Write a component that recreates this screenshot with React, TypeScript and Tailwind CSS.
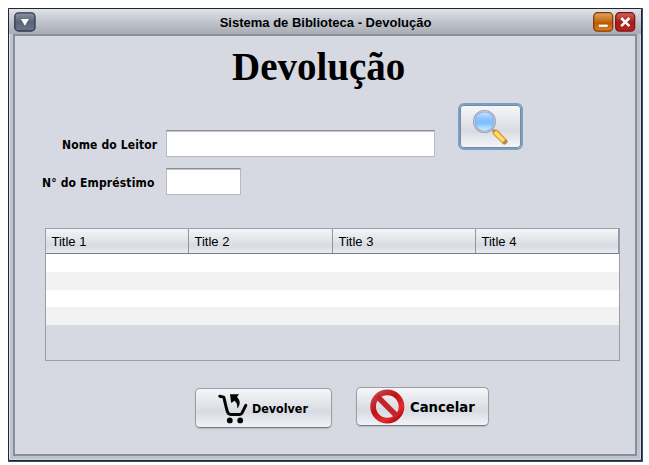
import React from "react";

const label = "font-['DejaVu_Sans_Condensed','DejaVu_Sans',sans-serif] font-stretch-condensed font-bold text-black whitespace-nowrap";
const button =
  "flex items-center rounded-[5px] border border-[#9b9da4] border-b-[#777a81] bg-linear-to-b from-[#f6f7f9] via-[#d8dbe1] via-60% to-[#f0f2f7] shadow-[0_1px_1px_#b5b9c2]";
const field =
  "h-[27px] border border-[#b8bac0] border-t-[#8d8e91] bg-white shadow-[inset_0_1px_0_#c4c5c7] outline-none";

function MenuButton() {
  return (
    <svg width="22" height="20" viewBox="0 0 22 20">
      <defs>
        <linearGradient id="menu" x2="0" y2="1">
          <stop stopColor="#8b94a3" />
          <stop offset=".5" stopColor="#596477" />
          <stop offset="1" stopColor="#69758a" />
        </linearGradient>
      </defs>
      <rect x=".8" y=".8" width="20.2" height="18.2" rx="3.8" fill="url(#menu)" stroke="#303a4b" strokeWidth="1.3" />
      <path d="M6.9 7h8L10.9 13.8z" fill="#fff" />
    </svg>
  );
}

function MinimizeButton() {
  return (
    <svg width="21" height="20" viewBox="0 0 21 20">
      <defs>
        <linearGradient id="min" x2="0" y2="1">
          <stop stopColor="#dfa563" />
          <stop offset=".48" stopColor="#c46b14" />
          <stop offset=".52" stopColor="#bc5900" />
          <stop offset="1" stopColor="#e18118" />
        </linearGradient>
      </defs>
      <rect x=".7" y=".7" width="19" height="18.4" rx="3.8" fill="url(#min)" stroke="#853600" strokeWidth="1.2" />
      <rect x="5.5" y="12.3" width="9.5" height="3" rx=".8" fill="#fff" stroke="#9b4300" strokeWidth=".5" />
    </svg>
  );
}

function CloseButton() {
  return (
    <svg width="21" height="20" viewBox="0 0 21 20">
      <defs>
        <linearGradient id="close" x2="0" y2="1">
          <stop stopColor="#cc6762" />
          <stop offset=".5" stopColor="#a91e17" />
          <stop offset="1" stopColor="#b4241b" />
        </linearGradient>
      </defs>
      <rect x=".7" y=".7" width="19" height="18.4" rx="3.8" fill="url(#close)" stroke="#820f10" strokeWidth="1.2" />
      <path d="M6.2 6l8.2 8.2M14.4 6l-8.2 8.2" stroke="#fff" strokeWidth="2.5" />
    </svg>
  );
}

function SearchIcon() {
  return (
    <svg width="36" height="37" viewBox="0 0 36 37">
      <defs>
        <linearGradient id="glass" x2="0" y2="1">
          <stop stopColor="#cbe8ff" />
          <stop offset=".42" stopColor="#86c0ff" />
          <stop offset=".58" stopColor="#7bbeff" />
          <stop offset="1" stopColor="#d8fbff" />
        </linearGradient>
        <linearGradient id="handle" x1="0" y1="1" x2="1" y2="0">
          <stop stopColor="#f08c00" />
          <stop offset=".5" stopColor="#ffe070" />
          <stop offset="1" stopColor="#eb9c00" />
        </linearGradient>
      </defs>
      <path d="M19.5 19.5l4 4" stroke="#a3a3b8" strokeWidth="3" />
      <path d="M23.7 23.7l8.8 8.8" stroke="#d08a1c" strokeWidth="6" strokeLinecap="round" />
      <path d="M21.4 24.4l3-3 9 9-2.9 3.2z" fill="url(#handle)" />
      <path d="M31.5 34.2l2.6-2.6" stroke="#a08c84" strokeWidth="1.8" strokeLinecap="round" />
      <circle cx="12.5" cy="12.5" r="10.4" fill="url(#glass)" stroke="#989cb8" strokeWidth="2.2" />
      <circle cx="12.5" cy="12.5" r="10.3" fill="none" stroke="#cdd1e2" strokeWidth=".9" />
    </svg>
  );
}

function CartIcon() {
  return (
    <svg width="30" height="31" viewBox="0 0 30 31" fill="none">
      <path d="M1.8 3.2l4 .9C7 9 8 14 9.2 18q.8 3.4 3.6 3.4H22q1.4 0 2.2-1.8L27.8 12.4" stroke="#050505" strokeWidth="3" strokeLinecap="round" strokeLinejoin="round" />
      <circle cx="11.8" cy="27.4" r="2.9" fill="#050505" />
      <circle cx="22.2" cy="27.4" r="2.9" fill="#050505" />
      <path d="M12 1.2h9l-2 2.8c3.6 3.6 3.6 7.8.2 11.6.5-3.8-.7-6.1-2.6-7.8L13.2 10z" fill="#050505" />
    </svg>
  );
}

function CancelIcon() {
  return (
    <svg width="35" height="36" viewBox="0 0 35 36" fill="none">
      <defs>
        <linearGradient id="ban" x1="0" y1="0" x2=".8" y2="1">
          <stop stopColor="#c74d4c" />
          <stop offset=".45" stopColor="#bd1118" />
          <stop offset=".8" stopColor="#e52c2e" />
          <stop offset="1" stopColor="#b90d14" />
        </linearGradient>
      </defs>
      <circle cx="17.3" cy="17.5" r="14.2" stroke="url(#ban)" strokeWidth="5.7" />
      <path d="M7.3 7.5l20 20" stroke="#c5232a" strokeWidth="5.5" />
    </svg>
  );
}

export default function App() {
  return (
    <div className="h-[465px] w-[649px] overflow-hidden bg-white pt-2 pl-2">
      <div className="h-[454px] w-[635px] bg-[#31506b] pr-px pb-px">
        <main className="flex h-[453px] w-[634px] flex-col rounded-[2px] border border-[#202630] bg-[#bfc3cc] shadow-[inset_1px_1px_0_#e0e2e6,inset_-1px_-1px_0_#d3d6dc]">
          <header className="flex h-[25px] shrink-0 items-start bg-linear-to-b from-[#e1e3e7] via-[#c2c5ce] to-[#a7acb5] px-[5px] pt-[3px]">
            <MenuButton />
            <h1 className="flex-1 pt-[3px] pl-[22px] text-center font-['Liberation_Sans',Arial,sans-serif] text-[13px] leading-[16px] font-bold text-black">
              <span>Sistema de Biblioteca - Devolução</span>
            </h1>
            <div className="flex gap-px">
              <MinimizeButton />
              <CloseButton />
            </div>
          </header>
          <section className="mx-1 mb-1 flex h-[422px] flex-col border-2 border-[#878e9c] bg-[#d6d9e1]">
            <h2 className="h-[67px] pt-[8px] pl-[217px] font-['Liberation_Serif','Times_New_Roman',serif] text-[39px] leading-[46px] font-bold text-black">Devolução</h2>
            <div className="flex h-[125px] pl-[27px]">
              <div className="w-[416px] pt-[27px]">
                <div className="flex items-center">
                  <label className={label + " w-[124px] pt-[2px] pl-5 text-[12px] tracking-[0.13px]"} htmlFor="reader">Nome do Leitor</label>
                  <input id="reader" className={field + " w-[269px]"} />
                </div>
                <div className="mt-[11px] flex items-center">
                  <label className={label + " w-[124px] pt-[2px] text-[12px] tracking-[0.15px]"} htmlFor="loan">N° do Empréstimo</label>
                  <input id="loan" className={field + " w-[75px]"} />
                </div>
              </div>
              <button aria-label="Pesquisar" className="flex h-[47px] w-[65px] items-start rounded-[6px] border-2 border-[#72a3cd] bg-linear-to-b from-[#f7f8fa] via-[#d8dce2] via-60% to-[#f6f7fb] pt-[4px] pl-[12px] shadow-[inset_0_0_0_1px_#83868c]">
                <SearchIcon />
              </button>
            </div>
            <div className="ml-[30px] h-[133px] w-[575px] border border-[#9a9ea8] bg-[#d6d9e1]">
              <div className="grid h-[25px] grid-cols-[143px_144px_143px_143px] border-b border-[#747b87] bg-linear-to-b from-[#f4f5f7] via-[#d8dbe2] via-70% to-[#eaedf3]">
                {["Title 1", "Title 2", "Title 3", "Title 4"].map((title) => (
                  <div key={title} className="border-r border-[#9297a1] pt-[5px] pl-[5.5px] font-['Liberation_Sans',Arial,sans-serif] text-[13px] leading-[16px] text-black">{title}</div>
                ))}
              </div>
              <div className="h-[18px] bg-white" />
              <div className="h-[18px] bg-[#f2f2f2]" />
              <div className="h-[17px] bg-white" />
              <div className="h-[18px] bg-[#f2f2f2]" />
            </div>
            <div className="flex items-start pt-[26px] pl-[180px]">
              <button className={button + " mt-px h-[40px] w-[137px] gap-[4px] pl-[22px]"}>
                <CartIcon />
                <span className={label + " pt-[2px] text-[12.4px]"}>Devolver</span>
              </button>
              <button className={button + " ml-[24px] h-[39px] w-[133px] gap-[5px] pl-[13px]"}>
                <CancelIcon />
                <span className={label + " pt-[2px] text-[14.7px]"}>Cancelar</span>
              </button>
            </div>
          </section>
        </main>
      </div>
    </div>
  );
}
